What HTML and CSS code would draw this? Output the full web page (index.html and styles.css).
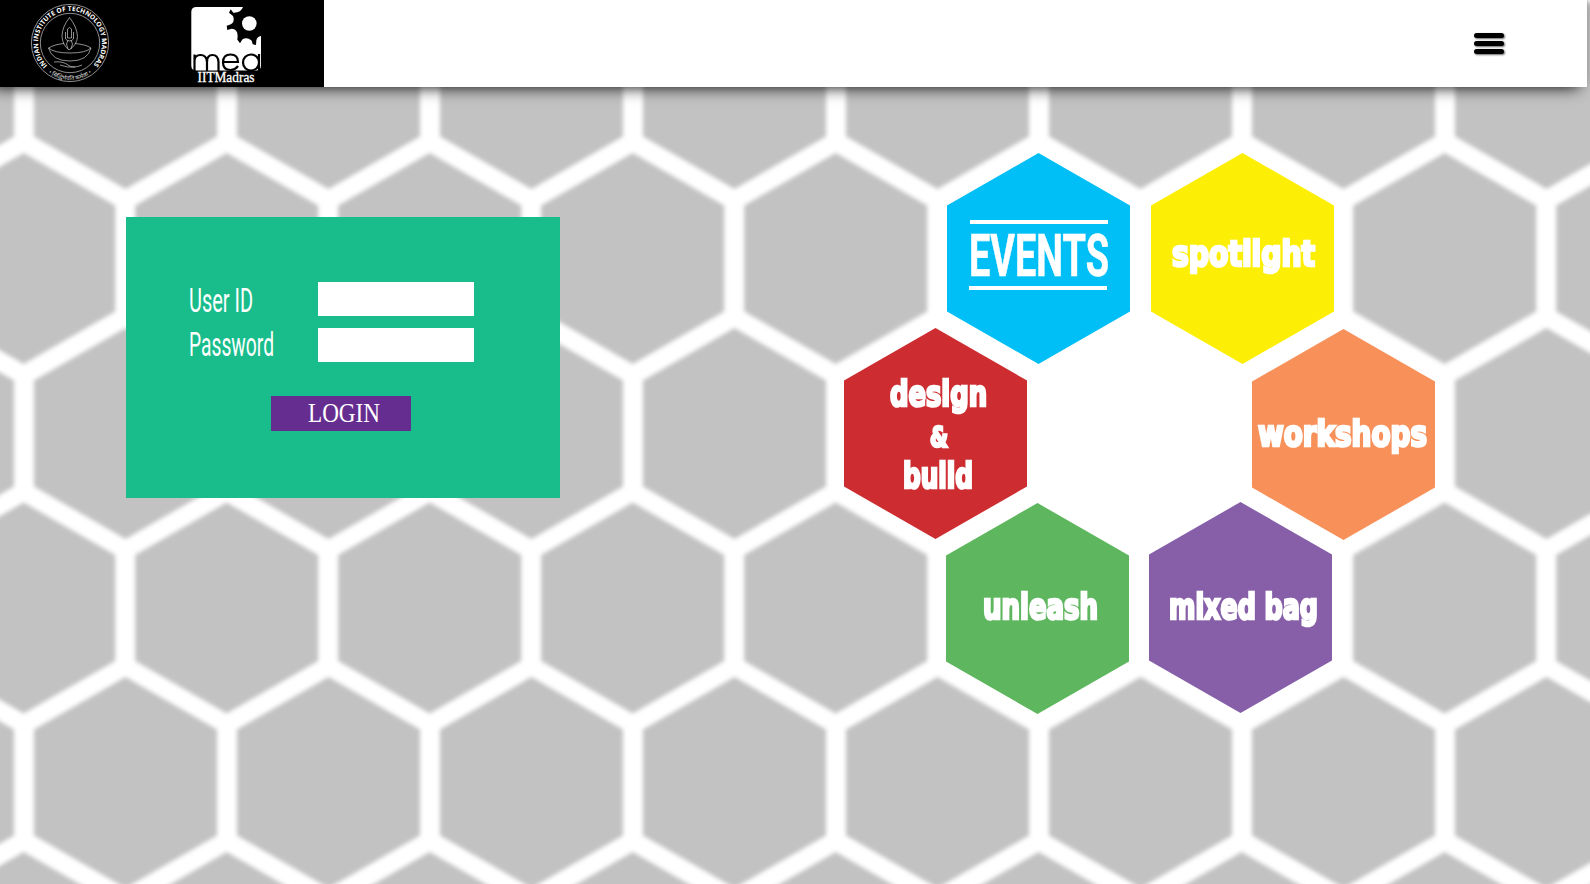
FILE: index.html
```html
<!DOCTYPE html>
<html lang="en">
<head>
<meta charset="utf-8">
<title>MEA IIT Madras</title>
<link rel="stylesheet" href="styles.css">
</head>
<body>
<svg class="honeycomb" width="1590" height="884" viewBox="0 0 1590 884" aria-hidden="true">
  <defs>
    <path id="cell" d="M0-105.500 91.500-53V53L0 105.500-91.500 53V-53Z"/>
    <g id="row"><use href="#cell" x="-203"/><use href="#cell"/><use href="#cell" x="203"/><use href="#cell" x="406"/><use href="#cell" x="609"/><use href="#cell" x="812"/><use href="#cell" x="1015"/><use href="#cell" x="1218"/><use href="#cell" x="1421"/><use href="#cell" x="1624"/></g>
  </defs>
  <g class="cells">
    <use href="#row" x="125.500" y="83.500"/>
    <use href="#row" x="23.700" y="258.500"/>
    <use href="#row" x="125.500" y="433.500"/>
    <use href="#row" x="23.700" y="608"/>
    <use href="#row" x="125.500" y="782.500"/>
    <use href="#row" x="23.700" y="957.500"/>
  </g>
  <g class="clearing">
    <use href="#cell" x="1038.500" y="258.500"/><use href="#cell" x="1242" y="258.500"/>
    <use href="#cell" x="936.500" y="433.500"/><use href="#cell" x="1140" y="433.500"/><use href="#cell" x="1343" y="433.500"/>
    <use href="#cell" x="1038.500" y="608"/><use href="#cell" x="1241.500" y="608"/>
  </g>
</svg>

<header class="topbar">
  <div class="brand">
    <svg class="seal" width="80" height="80" viewBox="0 0 80 80" role="img" aria-label="Indian Institute of Technology Madras">
      <defs>
        <path id="arc-top" d="M17.400 62.600A32 32 0 1 1 62.600 62.600"/>
        <path id="arc-bottom" d="M10.300 62.300A37.200 37.200 0 0 0 69.700 62.300"/>
      </defs>
      <g class="seal-lines">
        <circle cx="40" cy="40" r="38.600"/>
        <circle cx="40" cy="40" r="29.700"/>
        <path d="M39.500 14.500Q32 24 32 33.500Q32.500 42 39 47Q47 42 47.500 33.500Q47 24 39.500 14.500Z"/>
        <path d="M37.500 26q2-3 4 0v9h-4ZM35.500 29v7q4 4 8 0v-7M38 37l-1.500 4 1.500 5M41 37l1.500 4-1.500 5"/>
        <path d="M18.500 45Q24 41.500 34 40.500M45 40.500Q56 41.500 61 45Q58 58 40 58Q22 58 18.500 45Q24 50 40 50Q56 50 61 45"/>
        <path d="M24 59Q33 58 38 62T52 62M30 62Q38 65 45 64"/>
      </g>
      <text class="seal-text"><textPath href="#arc-top" textLength="149" lengthAdjust="spacingAndGlyphs">INDIAN INSTITUTE OF TECHNOLOGY MADRAS</textPath></text>
      <text class="seal-motto"><textPath href="#arc-bottom" startOffset="50%">• सिद्धिर्भवति कर्मजा •</textPath></text>
    </svg>
    <svg class="mea" width="74" height="80" viewBox="0 0 74 80" role="img" aria-label="mea IITMadras">
      <path class="mea-plate" d="M6.500 3H53Q51 9 43.300 8.700L40.700 5.300 39 8.700 43 12Q46 20 36.700 21.700L37.300 26 41.700 24.700Q49 25 47.300 35.500L50 39.300 52.300 35.500Q57 32.500 61.700 36.700L62.700 40.300 66 41 66.300 36.700Q67 32.500 71 32V61.500Q71 66.500 66 66.500H6.500Q1.300 66.500 1.300 61.500V8Q1.300 3 6.500 3Z"/>
      <circle class="mea-plate" cx="59.300" cy="19.500" r="7.300"/>
      <g class="mea-word">
        <path d="M4.500 67V50.500M4.500 57Q4.500 51 10.500 51T17 58V67M17 58Q17 51 22.500 51T28.500 58V67"/>
        <path d="M33 58H48Q48 50.500 40.500 50.500T33 58.500Q33 66 40.500 66Q45 66 48 62"/>
        <path d="M69 50V67M69 58.500A8 8 0 1 0 53 58.500A8 8 0 1 0 69 58.500"/>
      </g>
      <text class="mea-text" x="7.500" y="77.500" textLength="57" lengthAdjust="spacingAndGlyphs">IITMadras</text>
    </svg>
  </div>
  <button class="menu" aria-label="Menu"><span></span><span></span><span></span></button>
</header>

<form class="login">
  <div class="field">
    <label for="user"><svg width="100" height="46" viewBox="0 0 100 46"><text class="label-text" x="-1" y="30" textLength="64" lengthAdjust="spacingAndGlyphs">User ID</text></svg></label>
    <input id="user" type="text">
  </div>
  <div class="field">
    <label for="pass"><svg width="100" height="46" viewBox="0 0 100 46"><text class="label-text" x="-1" y="28" textLength="85" lengthAdjust="spacingAndGlyphs">Password</text></svg></label>
    <input id="pass" type="password">
  </div>
  <button class="submit" type="button"><svg width="140" height="35" viewBox="0 0 140 35"><text class="submit-text" x="37" y="26" textLength="72" lengthAdjust="spacingAndGlyphs">LOGIN</text></svg></button>
</form>

<svg class="hexmenu" width="600" height="570" viewBox="840 148 600 570">
  <defs><path id="tile" d="M0-105.500 91.500-53V53L0 105.500-91.500 53V-53Z"/></defs>
  <use class="events" href="#tile" x="1038.500" y="258.500"/>
  <use class="spotlight" href="#tile" x="1242.500" y="258.500"/>
  <use class="design" href="#tile" x="935.500" y="433.500"/>
  <use class="workshops" href="#tile" x="1343.500" y="434.500"/>
  <use class="unleash" href="#tile" x="1037.500" y="608.500"/>
  <use class="mixed" href="#tile" x="1240.500" y="607.500"/>
  <path class="rule" d="M970 222h138M969 288h138"/>
  <text class="events-text" x="969" y="276" textLength="140" lengthAdjust="spacingAndGlyphs">EVENTS</text>
  <g class="tile-text">
    <text x="1172" y="265.500" textLength="143" lengthAdjust="spacingAndGlyphs">spotlight</text>
    <text x="890" y="406" textLength="97" lengthAdjust="spacingAndGlyphs">design</text>
    <text class="amp" x="930" y="447" textLength="18" lengthAdjust="spacingAndGlyphs">&amp;</text>
    <text x="903" y="488" textLength="70" lengthAdjust="spacingAndGlyphs">build</text>
    <text x="1258" y="446" textLength="169" lengthAdjust="spacingAndGlyphs">workshops</text>
    <text x="983" y="619" textLength="115" lengthAdjust="spacingAndGlyphs">unleash</text>
    <text x="1169" y="619" textLength="149" lengthAdjust="spacingAndGlyphs">mixed bag</text>
  </g>
</svg>
</body>
</html>
```
FILE: styles.css
```css
* { box-sizing: border-box; }
body { margin: 0; width: 1590px; height: 884px; overflow: hidden; position: relative; background: #fff; display: grid; grid-template-columns: 840px 1fr; grid-template-rows: 87px 1fr; }
.honeycomb { position: absolute; left: 0; top: 0; z-index: -1; }
.cells { fill: #c2c2c2; filter: blur(2px); }
.clearing { fill: #fff; stroke: #fff; stroke-width: 12; }

.topbar { grid-column: 1 / -1; width: 1587px; height: 87px; background: #fff; box-shadow: -8px 0 15px #000; display: flex; justify-content: space-between; align-items: center; }
.brand { width: 324px; height: 87px; background: #000; display: flex; padding: 3px 0 0 30px; }
.mea { margin: 1px 0 0 80px; }
.seal-lines { fill: none; stroke: #ccc; stroke-width: .7; }
.seal-text { fill: #fff; font: bold 6.6px "Open Sans", sans-serif; }
.seal-motto { fill: #ddd; font: 5.800px "Noto Sans", sans-serif; text-anchor: middle; }
.mea-plate { fill: #fff; }
.mea-word { fill: none; stroke: #000; stroke-width: 2.200; }
.mea-text { fill: #fff; stroke: #fff; stroke-width: .3; font: 14px "Liberation Serif", serif; }

.menu { border: 0; background: none; padding: 0; margin-right: 83px; width: 30px; display: flex; flex-direction: column; gap: 3px; }
.menu span { height: 5px; border-radius: 3px; background: #000; box-shadow: 1px 1px 2px #0009; }

.login { margin: 130px 0 0 126px; width: 434px; height: 281px; background: #18bd8b; padding: 65px 86px 0 64px; display: flex; flex-direction: column; align-items: flex-start; }
.field { display: flex; width: 284px; height: 34px; margin-bottom: 12px; justify-content: space-between; }
.field svg, .submit svg { display: block; overflow: visible; }
.field input { width: 156px; height: 34px; border: 0; padding: 4px 8px; background: #fff; font: 18px "Liberation Sans", sans-serif; }
.label-text { fill: #fff; font: 33.500px "Roboto", sans-serif; }
.submit { margin: 22px 0 0 81px; width: 140px; height: 35px; border: 0; padding: 0; background: #662d91; }
.submit-text { fill: #fff; font: 27px "Liberation Serif", serif; }

.hexmenu { margin-top: 61px; overflow: visible; }
.events { fill: #00bff6; }
.spotlight { fill: #fcee05; }
.design { fill: #cd2d31; }
.workshops { fill: #f79059; }
.unleash { fill: #5eb75e; }
.mixed { fill: #865fa8; }
.rule { stroke: #fff; stroke-width: 4; }
.events-text { fill: #fff; stroke: #fff; stroke-width: .6; font: bold 59px "Roboto", sans-serif; }
.tile-text { fill: #fff; stroke: #fff; stroke-width: 2.600; font: bold 35px "DejaVu Sans Condensed", "DejaVu Sans", sans-serif; }
.amp { font-size: 28px; }
```
